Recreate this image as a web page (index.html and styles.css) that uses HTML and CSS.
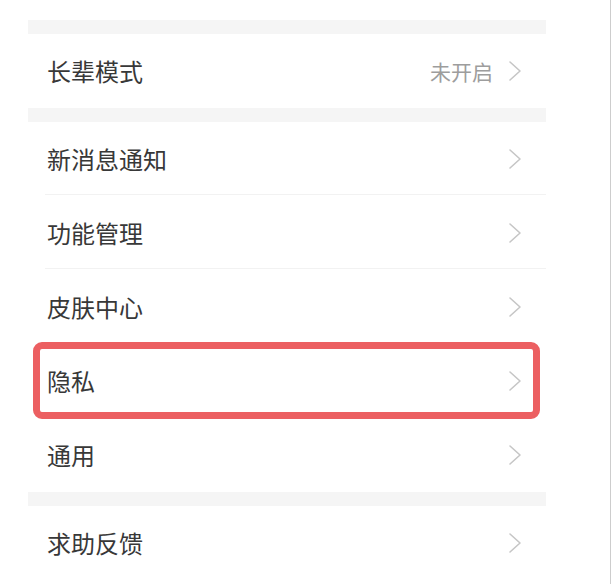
FILE: index.html
```html
<!DOCTYPE html>
<html lang="zh-CN">
<head>
  <meta charset="UTF-8" />
  <meta name="viewport" content="width=device-width, initial-scale=1.0"/>
  <title>设置</title>
  <link rel="stylesheet" href="styles.css">
</head>
<body>

  <div class="screen">
    <div class="settings">

      <div class="gap"></div>
      <div class="group">
        <div class="row">
          <span class="label">长辈模式</span>
          <span class="value">未开启</span>
          <svg class="chevron" viewBox="0 0 14 22"><path d="M2 2 L12 11 L2 20" /></svg>
        </div>
      </div>

      <div class="gap"></div>
      <div class="group">
        <div class="row">
          <span class="label">新消息通知</span>
          <svg class="chevron" viewBox="0 0 14 22"><path d="M2 2 L12 11 L2 20" /></svg>
        </div>
        <div class="row">
          <span class="label">功能管理</span>
          <svg class="chevron" viewBox="0 0 14 22"><path d="M2 2 L12 11 L2 20" /></svg>
        </div>
        <div class="row">
          <span class="label">皮肤中心</span>
          <svg class="chevron" viewBox="0 0 14 22"><path d="M2 2 L12 11 L2 20" /></svg>
        </div>
        <div class="row highlighted">
          <span class="label">隐私</span>
          <svg class="chevron" viewBox="0 0 14 22"><path d="M2 2 L12 11 L2 20" /></svg>
          <div class="mark"></div>
        </div>
        <div class="row">
          <span class="label">通用</span>
          <svg class="chevron" viewBox="0 0 14 22"><path d="M2 2 L12 11 L2 20" /></svg>
        </div>
      </div>

      <div class="gap"></div>
      <div class="group">
        <div class="row">
          <span class="label">求助反馈</span>
          <svg class="chevron" viewBox="0 0 14 22"><path d="M2 2 L12 11 L2 20" /></svg>
        </div>
      </div>

    </div>
  </div>

</body>
</html>
```

FILE: styles.css
```css
:root {
  --bg: #ffffff;
  --gap-bg: #f5f5f5;
  --divider: #f2f2f2;
  --text-main: #383838;
  --text-secondary: #9d9d9d;
  --chevron: #c6c6c6;
  --mark: #ec5f61;
}

* {
  margin: 0;
  padding: 0;
  box-sizing: border-box;
}

body {
  background: var(--bg);
  color: var(--text-main);
  font-family: "Noto Sans CJK SC", "Noto Sans", sans-serif;
}

.screen {
  width: 611px;
  height: 584px;
  border-right: 1px solid #cdcdcd;
  padding: 20px 0 0 28px;
  overflow: hidden;
}

.settings {
  width: 518px;
}

.gap {
  height: 14px;
  background: var(--gap-bg);
}

.row {
  height: 74px;
  display: flex;
  align-items: center;
  padding: 0 24px 0 19px;
  position: relative;
}

.row + .row::before {
  content: '';
  position: absolute;
  top: -2px;
  left: 17px;
  right: 0;
  height: 1px;
  background: var(--divider);
}

.highlighted::before,
.highlighted + .row::before {
  display: none;
}

.label {
  flex: 1;
  font-size: 24px;
  line-height: 1;
}

.value {
  font-size: 21px;
  color: var(--text-secondary);
  margin-right: 15px;
}

.chevron {
  width: 14px;
  height: 22px;
  fill: none;
  stroke: var(--chevron);
  stroke-width: 1.6;
  stroke-linecap: round;
  stroke-linejoin: round;
}

/* red annotation frame over the privacy row */
.mark {
  position: absolute;
  top: -2px;
  bottom: -1px;
  left: 5px;
  right: 6px;
  border: 7px solid var(--mark);
  border-radius: 9px;
}
```
